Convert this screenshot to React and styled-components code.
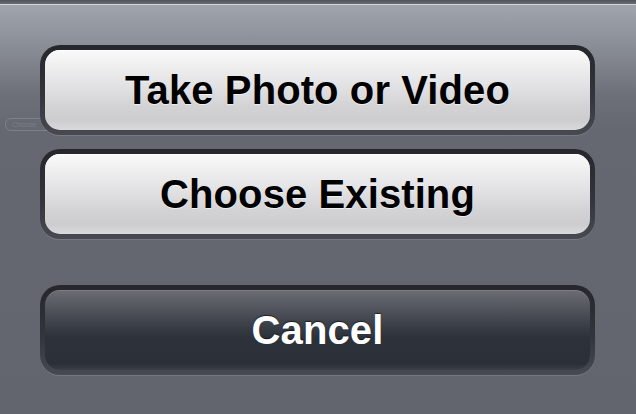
import styled, { createGlobalStyle } from "styled-components";

const GlobalStyle = createGlobalStyle`
  html, body {
    margin: 0;
    padding: 0;
    background: #62656e;
  }
  #root {
    width: 636px;
    height: 414px;
  }
`;

const Sheet = styled.div`
  width: 636px;
  height: 414px;
  display: flex;
  flex-direction: column;
  overflow: hidden;
  position: relative;
  font-family: "Liberation Sans", Arial, sans-serif;
  background: linear-gradient(
    to bottom,
    #a3a7ae 0px,
    #8d9199 40px,
    #6d7079 95px,
    #656871 130px,
    #62656e 414px
  );
`;

const TopEdge = styled.div`
  height: 4px;
  background: linear-gradient(to bottom, #4f5258, #6a6d73);
  border-bottom: 1px solid #d3d6db;
  flex-shrink: 0;
`;

const Actions = styled.div`
  display: flex;
  flex-direction: column;
  padding: 40px 41px 0 40px;
  position: relative;
  z-index: 1;
`;

const Well = styled.div`
  height: 90px;
  box-sizing: border-box;
  padding: 5px;
  border-radius: 20px;
  background: linear-gradient(to bottom, #25272c, #33363c 60%, #474a51);
  box-shadow: 0 1px 0 rgba(255, 255, 255, 0.12);
  margin-top: ${(p) => p.$gap || 0}px;
`;

const ActionButton = styled.button`
  width: 100%;
  height: 100%;
  border: none;
  border-radius: 15px;
  display: flex;
  align-items: center;
  justify-content: center;
  font-family: inherit;
  font-weight: bold;
  font-size: 40px;
  letter-spacing: 0.1px;
  cursor: pointer;
  padding: 0;

  ${(p) =>
    p.$dark
      ? `
    color: #ffffff;
    text-shadow: 0 -1px 1px rgba(0, 0, 0, 0.55);
    background: linear-gradient(
      to bottom,
      #6b6d73 0%,
      #55585f 20%,
      #3a3e46 45%,
      #2d313a 60%,
      #2b2f38 92%,
      #3a3e47 100%
    );
    box-shadow: inset 0 1px 0 rgba(255, 255, 255, 0.12);
  `
      : `
    color: #000000;
    text-shadow: 0 1px 0 rgba(255, 255, 255, 0.6);
    background: linear-gradient(
      to bottom,
      #f9f9f9 0%,
      #f0f0f1 18%,
      #e2e2e4 45%,
      #d3d3d6 70%,
      #cdcdd0 88%,
      #dadadd 100%
    );
    box-shadow: inset 0 1px 0 #ffffff;
  `}
`;

const Ghost = styled.div`
  position: absolute;
  left: 5px;
  top: 118px;
  width: 48px;
  height: 13px;
  border: 1px solid rgba(140, 144, 152, 0.6);
  border-radius: 6px;
  font-size: 7px;
  line-height: 11px;
  color: rgba(125, 129, 137, 0.9);
  padding-left: 6px;
  box-sizing: border-box;
  white-space: nowrap;
`;

export default function App() {
  return (
    <>
      <GlobalStyle />
      <Sheet>
        <TopEdge />
        <Ghost>Choose</Ghost>
        <Actions>
          <Well>
            <ActionButton>Take Photo or Video</ActionButton>
          </Well>
          <Well $gap={14}>
            <ActionButton>Choose Existing</ActionButton>
          </Well>
          <Well $gap={46}>
            <ActionButton $dark>Cancel</ActionButton>
          </Well>
        </Actions>
      </Sheet>
    </>
  );
}
